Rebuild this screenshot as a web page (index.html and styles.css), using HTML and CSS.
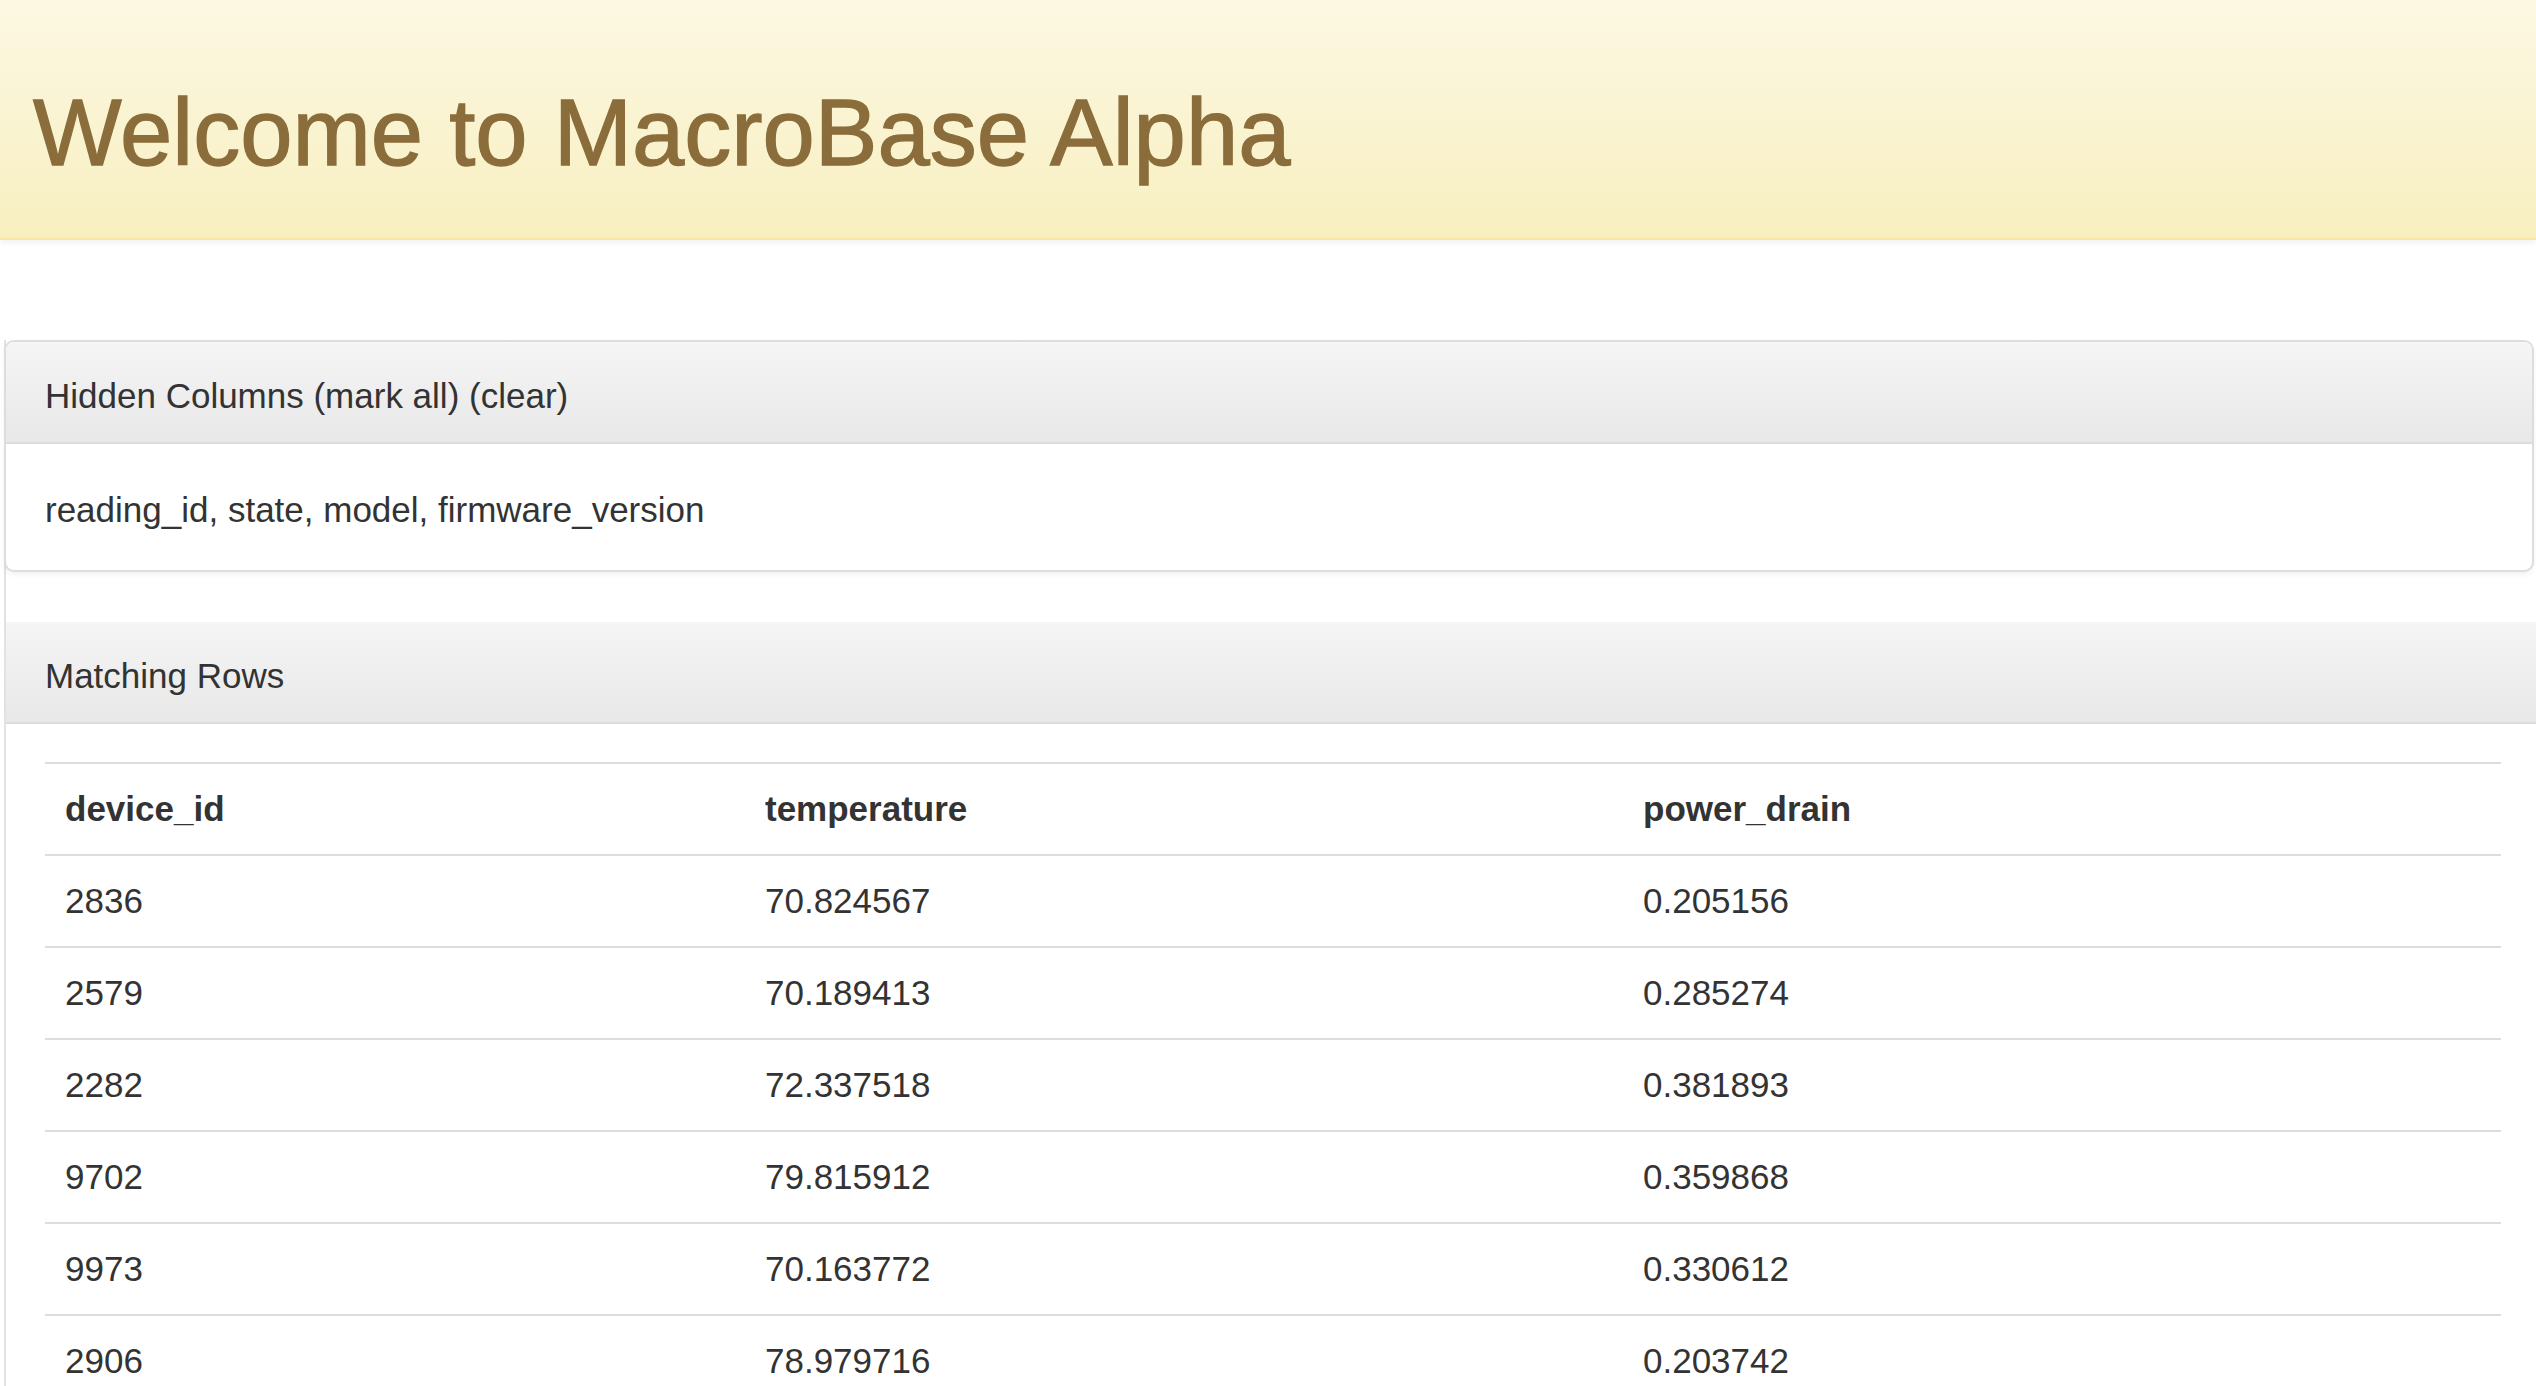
FILE: index.html
```html
<!DOCTYPE html>
<html lang="en">
<head>
<meta charset="utf-8">
<title>MacroBase</title>
<link rel="stylesheet" href="styles.css">
</head>
<body>
<header class="banner">
  <h1 class="banner-title">Welcome to MacroBase Alpha</h1>
</header>
<main class="content">
  <section class="panel panel-rounded">
    <div class="panel-heading">Hidden Columns (mark all) (clear)</div>
    <div class="panel-body panel-text">reading_id, state, model, firmware_version</div>
  </section>
  <section class="panel panel-open">
    <div class="panel-heading">Matching Rows</div>
    <div class="panel-body">
      <table class="data-table">
        <thead>
          <tr><th class="col-1">device_id</th><th class="col-2">temperature</th><th>power_drain</th></tr>
        </thead>
        <tbody>
          <tr><td>2836</td><td>70.824567</td><td>0.205156</td></tr>
          <tr><td>2579</td><td>70.189413</td><td>0.285274</td></tr>
          <tr><td>2282</td><td>72.337518</td><td>0.381893</td></tr>
          <tr><td>9702</td><td>79.815912</td><td>0.359868</td></tr>
          <tr><td>9973</td><td>70.163772</td><td>0.330612</td></tr>
          <tr><td>2906</td><td>78.979716</td><td>0.203742</td></tr>
        </tbody>
      </table>
    </div>
  </section>
</main>
</body>
</html>
```
FILE: styles.css
```css
html, body {
  margin: 0;
  padding: 0;
  overflow: hidden;
  background: #fff;
}
body {
  font-family: "Liberation Sans", Arial, Helvetica, sans-serif;
  color: #333;
  font-size: 35px;
  line-height: 50px;
}
.banner {
  height: 240px;
  padding: 81px 0 0 33px;
  box-sizing: border-box;
  background: linear-gradient(to bottom, #fcf8e3 0%, #f8efc0 100%);
  border-bottom: 2px solid #f5e79e;
  box-shadow: 0 3px 5px rgba(0, 0, 0, 0.05);
}
.banner-title {
  margin: 0;
  font-size: 94px;
  line-height: 1.1;
  font-weight: normal;
  color: #8a6d3b;
  -webkit-text-stroke: 1.3px #8a6d3b;
}
.content {
  margin: 100px 2px 0 4px;
  border-left: 2px solid #e2e2e2;
}
.panel {
  background: #fff;
}
.panel-rounded {
  margin-left: -2px;
  border: 2px solid #ddd;
  border-radius: 10px;
  box-shadow: 0 3px 5px rgba(0, 0, 0, 0.05);
  overflow: hidden;
  margin-bottom: 50px;
}
.panel-open {
  margin-right: -8px;
}
.panel-heading {
  padding: 29px 38px 21px 39px;
  background: linear-gradient(to bottom, #f5f5f5 0%, #e8e8e8 100%);
  border-bottom: 2px solid #ddd;
}
.panel-body {
  padding: 38px 38px 38px 39px;
}
.panel-text {
  padding-top: 41px;
  padding-bottom: 35px;
}
.data-table {
  width: 2456px;
  border-collapse: collapse;
}
.data-table th,
.data-table td {
  text-align: left;
  padding: 20px 19px 20px 20px;
  border-top: 2px solid #ddd;
  vertical-align: top;
}
.data-table th {
  font-weight: bold;
}
.col-1 {
  width: 661px;
}
.col-2 {
  width: 839px;
}
```
